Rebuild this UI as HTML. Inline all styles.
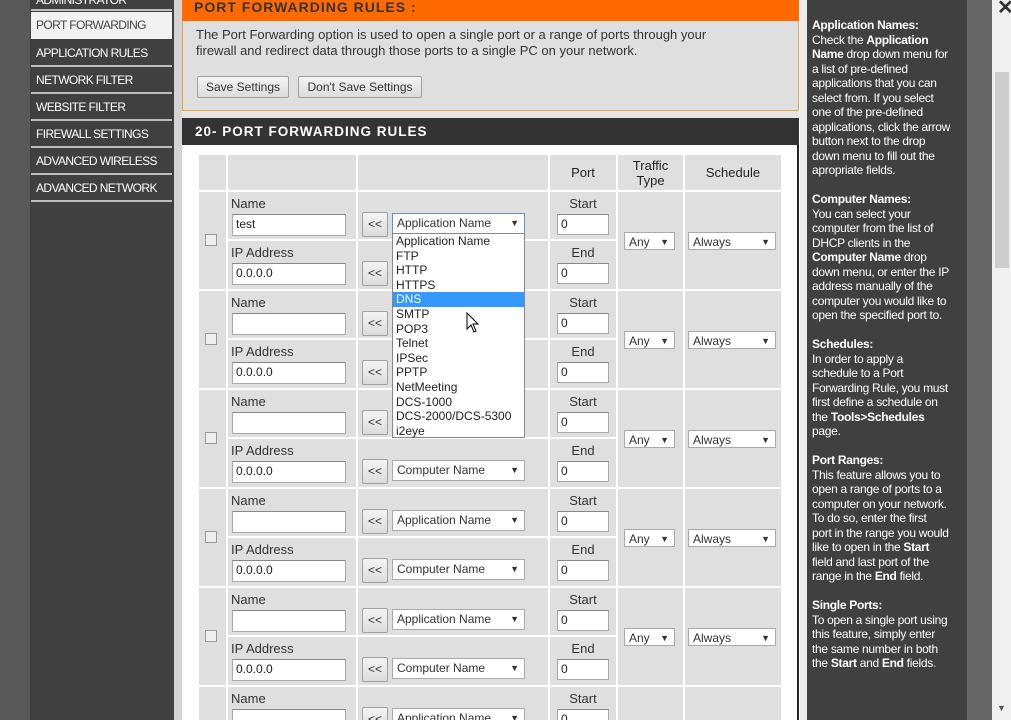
<!DOCTYPE html>
<html style="overflow:hidden;height:720px"><head><meta charset="utf-8"><style>
*{margin:0;padding:0;box-sizing:border-box}
body{width:1011px;height:720px;overflow:hidden;position:relative;background:#fff;font-family:"Liberation Sans",Tahoma,sans-serif;font-size:12.5px;color:#222}
.a{position:absolute}
.side{left:0;top:0;width:30px;height:720px;background:#595959}
.menu{left:30px;top:0;width:144px;height:720px;background:#404040}
.mi{position:absolute;left:31px;width:141px;height:27px;color:#fff;font-size:12px;letter-spacing:-0.6px;line-height:26px;padding-left:5px;border-bottom:2px solid #bdbdbd;white-space:nowrap;overflow:hidden}
.gapstrip{left:174px;top:0;width:8px;height:720px;background:#d4d4d4}
.c{position:absolute;background:#dfdfdf}
.in{position:absolute;background:#fff;border:1px solid #a9a9a9;border-top-color:#888;font-size:12px;line-height:19px;padding-left:3px}
.btn{position:absolute;background:linear-gradient(#f4f4f4,#dcdcdc);border:1px solid #a0a0a0;border-radius:2px;font-size:12px;text-align:center;color:#333;white-space:nowrap}
.sel{position:absolute;background:#fff;border:1px solid #aaa;font-size:12px;line-height:18px;padding-left:4px;color:#333;white-space:nowrap}
.sel:after{content:"\25BC";position:absolute;right:5px;top:0;font-size:9px}
.lb{position:absolute;font-size:13px;color:#333;white-space:nowrap}
.row{position:absolute;left:0;width:1011px;height:99px;overflow:visible}
.help{left:807px;top:0;width:160px;height:720px;background:#404040;color:#fff;font-size:12px;line-height:14.5px;padding:18px 0 0 5px;letter-spacing:-0.3px;white-space:nowrap;overflow:hidden}
.dd{left:392px;top:233px;width:133px;height:205px;background:#fff;border:1px solid #888;font-size:12px;line-height:14.6px;color:#222}
.dd div{padding-left:3px;height:14.6px}
#wrap{position:absolute;left:0;top:0;width:1011px;height:720px;overflow:hidden}
</style></head><body><div id="wrap">
<div class="a side"></div>
<div class="a menu"></div>
<div class="mi" style="top:0;height:11px;line-height:0px">ADMINISTRATOR</div>
<div class="mi" style="top:12px;background:#f2f2f2;color:#444;border-bottom:none">PORT FORWARDING</div>
<div class="mi" style="top:40px">APPLICATION RULES</div>
<div class="mi" style="top:67px">NETWORK FILTER</div>
<div class="mi" style="top:94px">WEBSITE FILTER</div>
<div class="mi" style="top:121px">FIREWALL SETTINGS</div>
<div class="mi" style="top:148px">ADVANCED WIRELESS</div>
<div class="mi" style="top:175px">ADVANCED NETWORK</div>
<div class="a gapstrip"></div>

<div class="a" style="left:182px;top:0;width:617px;height:720px;background:#e6e6e6"></div>
<div class="a" style="left:182px;top:0;width:617px;height:21px;background:#ff6a00;color:#333;font-weight:bold;font-size:14px;letter-spacing:1px;padding-left:12px;line-height:14px">PORT FORWARDING RULES :</div>
<div class="a" style="left:182px;top:21px;width:617px;height:90px;background:#dfdfdf;border:1px solid #f0a040;border-top:none"></div>
<div class="a" style="left:196px;top:27px;font-size:13px;line-height:16px;color:#333;white-space:nowrap">The Port Forwarding option is used to open a single port or a range of ports through your<br>firewall and redirect data through those ports to a single PC on your network.</div>
<div class="btn" style="left:197px;top:76px;width:92px;height:22px;line-height:20px">Save Settings</div>
<div class="btn" style="left:298px;top:76px;width:124px;height:22px;line-height:20px">Don't Save Settings</div>
<div class="a" style="left:182px;top:118px;width:617px;height:27px;background:#333;color:#fff;font-weight:bold;font-size:13.5px;letter-spacing:1px;padding-left:13px;line-height:27px">20- PORT FORWARDING RULES</div>
<div class="a" style="left:182px;top:145px;width:617px;height:575px;background:#fff;border-right:2px solid #222"></div>

<div class="c" style="left:199px;top:155px;width:27px;height:35px"></div>
<div class="c" style="left:228px;top:155px;width:128px;height:35px"></div>
<div class="c" style="left:358px;top:155px;width:190px;height:35px"></div>
<div class="c" style="left:550px;top:155px;width:66px;height:35px;text-align:center;line-height:35px;font-size:13px">Port</div>
<div class="c" style="left:618px;top:155px;width:65px;height:35px;text-align:center;font-size:13px;line-height:15px;padding-top:3px">Traffic<br>Type</div>
<div class="c" style="left:685px;top:155px;width:96px;height:35px;text-align:center;line-height:35px;font-size:13px">Schedule</div>

<div class="row" style="top:192px">
<div class="c" style="left:199px;top:0;width:27px;height:97px"></div><div class="a" style="left:205px;top:42px;width:12px;height:12px;border:1px solid #999;background:#eee"></div>
<div class="c" style="left:228px;top:0;width:128px;height:47px"></div><div class="c" style="left:228px;top:49px;width:128px;height:48px"></div>
<div class="c" style="left:358px;top:0;width:190px;height:47px"></div><div class="c" style="left:358px;top:49px;width:190px;height:48px"></div>
<div class="c" style="left:550px;top:0;width:66px;height:47px"></div><div class="c" style="left:550px;top:49px;width:66px;height:48px"></div>
<div class="c" style="left:618px;top:0;width:65px;height:97px"></div><div class="c" style="left:685px;top:0;width:96px;height:97px"></div>
<div class="lb" style="left:231px;top:4px">Name</div><div class="in" style="left:232px;top:22px;width:114px;height:22px">test</div>
<div class="lb" style="left:231px;top:53px">IP Address</div><div class="in" style="left:232px;top:71px;width:114px;height:22px">0.0.0.0</div>
<div class="btn" style="left:362px;top:20px;width:26px;height:25px;line-height:23px">&lt;&lt;</div><div class="sel" style="left:392px;top:21px;width:133px;height:21px;border-color:#6a8fc0">Application Name</div>
<div class="btn" style="left:362px;top:69px;width:26px;height:25px;line-height:23px">&lt;&lt;</div><div class="sel" style="left:392px;top:70px;width:133px;height:21px">Computer Name</div>
<div class="lb" style="left:550px;width:66px;text-align:center;top:4px">Start</div><div class="in" style="left:557px;top:22px;width:52px;height:21px">0</div>
<div class="lb" style="left:550px;width:66px;text-align:center;top:53px">End</div><div class="in" style="left:557px;top:71px;width:52px;height:21px">0</div>
<div class="sel" style="left:624px;top:40px;width:51px;height:18px">Any</div><div class="sel" style="left:688px;top:40px;width:88px;height:18px">Always</div>
</div>

<div class="row" style="top:291px">
<div class="c" style="left:199px;top:0;width:27px;height:97px"></div><div class="a" style="left:205px;top:42px;width:12px;height:12px;border:1px solid #999;background:#eee"></div>
<div class="c" style="left:228px;top:0;width:128px;height:47px"></div><div class="c" style="left:228px;top:49px;width:128px;height:48px"></div>
<div class="c" style="left:358px;top:0;width:190px;height:47px"></div><div class="c" style="left:358px;top:49px;width:190px;height:48px"></div>
<div class="c" style="left:550px;top:0;width:66px;height:47px"></div><div class="c" style="left:550px;top:49px;width:66px;height:48px"></div>
<div class="c" style="left:618px;top:0;width:65px;height:97px"></div><div class="c" style="left:685px;top:0;width:96px;height:97px"></div>
<div class="lb" style="left:231px;top:4px">Name</div><div class="in" style="left:232px;top:22px;width:114px;height:22px"></div>
<div class="lb" style="left:231px;top:53px">IP Address</div><div class="in" style="left:232px;top:71px;width:114px;height:22px">0.0.0.0</div>
<div class="btn" style="left:362px;top:20px;width:26px;height:25px;line-height:23px">&lt;&lt;</div><div class="sel" style="left:392px;top:21px;width:133px;height:21px">Application Name</div>
<div class="btn" style="left:362px;top:69px;width:26px;height:25px;line-height:23px">&lt;&lt;</div><div class="sel" style="left:392px;top:70px;width:133px;height:21px">Computer Name</div>
<div class="lb" style="left:550px;width:66px;text-align:center;top:4px">Start</div><div class="in" style="left:557px;top:22px;width:52px;height:21px">0</div>
<div class="lb" style="left:550px;width:66px;text-align:center;top:53px">End</div><div class="in" style="left:557px;top:71px;width:52px;height:21px">0</div>
<div class="sel" style="left:624px;top:40px;width:51px;height:18px">Any</div><div class="sel" style="left:688px;top:40px;width:88px;height:18px">Always</div>
</div>

<div class="row" style="top:390px">
<div class="c" style="left:199px;top:0;width:27px;height:97px"></div><div class="a" style="left:205px;top:42px;width:12px;height:12px;border:1px solid #999;background:#eee"></div>
<div class="c" style="left:228px;top:0;width:128px;height:47px"></div><div class="c" style="left:228px;top:49px;width:128px;height:48px"></div>
<div class="c" style="left:358px;top:0;width:190px;height:47px"></div><div class="c" style="left:358px;top:49px;width:190px;height:48px"></div>
<div class="c" style="left:550px;top:0;width:66px;height:47px"></div><div class="c" style="left:550px;top:49px;width:66px;height:48px"></div>
<div class="c" style="left:618px;top:0;width:65px;height:97px"></div><div class="c" style="left:685px;top:0;width:96px;height:97px"></div>
<div class="lb" style="left:231px;top:4px">Name</div><div class="in" style="left:232px;top:22px;width:114px;height:22px"></div>
<div class="lb" style="left:231px;top:53px">IP Address</div><div class="in" style="left:232px;top:71px;width:114px;height:22px">0.0.0.0</div>
<div class="btn" style="left:362px;top:20px;width:26px;height:25px;line-height:23px">&lt;&lt;</div><div class="sel" style="left:392px;top:21px;width:133px;height:21px">Application Name</div>
<div class="btn" style="left:362px;top:69px;width:26px;height:25px;line-height:23px">&lt;&lt;</div><div class="sel" style="left:392px;top:70px;width:133px;height:21px">Computer Name</div>
<div class="lb" style="left:550px;width:66px;text-align:center;top:4px">Start</div><div class="in" style="left:557px;top:22px;width:52px;height:21px">0</div>
<div class="lb" style="left:550px;width:66px;text-align:center;top:53px">End</div><div class="in" style="left:557px;top:71px;width:52px;height:21px">0</div>
<div class="sel" style="left:624px;top:40px;width:51px;height:18px">Any</div><div class="sel" style="left:688px;top:40px;width:88px;height:18px">Always</div>
</div>

<div class="row" style="top:489px">
<div class="c" style="left:199px;top:0;width:27px;height:97px"></div><div class="a" style="left:205px;top:42px;width:12px;height:12px;border:1px solid #999;background:#eee"></div>
<div class="c" style="left:228px;top:0;width:128px;height:47px"></div><div class="c" style="left:228px;top:49px;width:128px;height:48px"></div>
<div class="c" style="left:358px;top:0;width:190px;height:47px"></div><div class="c" style="left:358px;top:49px;width:190px;height:48px"></div>
<div class="c" style="left:550px;top:0;width:66px;height:47px"></div><div class="c" style="left:550px;top:49px;width:66px;height:48px"></div>
<div class="c" style="left:618px;top:0;width:65px;height:97px"></div><div class="c" style="left:685px;top:0;width:96px;height:97px"></div>
<div class="lb" style="left:231px;top:4px">Name</div><div class="in" style="left:232px;top:22px;width:114px;height:22px"></div>
<div class="lb" style="left:231px;top:53px">IP Address</div><div class="in" style="left:232px;top:71px;width:114px;height:22px">0.0.0.0</div>
<div class="btn" style="left:362px;top:20px;width:26px;height:25px;line-height:23px">&lt;&lt;</div><div class="sel" style="left:392px;top:21px;width:133px;height:21px">Application Name</div>
<div class="btn" style="left:362px;top:69px;width:26px;height:25px;line-height:23px">&lt;&lt;</div><div class="sel" style="left:392px;top:70px;width:133px;height:21px">Computer Name</div>
<div class="lb" style="left:550px;width:66px;text-align:center;top:4px">Start</div><div class="in" style="left:557px;top:22px;width:52px;height:21px">0</div>
<div class="lb" style="left:550px;width:66px;text-align:center;top:53px">End</div><div class="in" style="left:557px;top:71px;width:52px;height:21px">0</div>
<div class="sel" style="left:624px;top:40px;width:51px;height:18px">Any</div><div class="sel" style="left:688px;top:40px;width:88px;height:18px">Always</div>
</div>

<div class="row" style="top:588px">
<div class="c" style="left:199px;top:0;width:27px;height:97px"></div><div class="a" style="left:205px;top:42px;width:12px;height:12px;border:1px solid #999;background:#eee"></div>
<div class="c" style="left:228px;top:0;width:128px;height:47px"></div><div class="c" style="left:228px;top:49px;width:128px;height:48px"></div>
<div class="c" style="left:358px;top:0;width:190px;height:47px"></div><div class="c" style="left:358px;top:49px;width:190px;height:48px"></div>
<div class="c" style="left:550px;top:0;width:66px;height:47px"></div><div class="c" style="left:550px;top:49px;width:66px;height:48px"></div>
<div class="c" style="left:618px;top:0;width:65px;height:97px"></div><div class="c" style="left:685px;top:0;width:96px;height:97px"></div>
<div class="lb" style="left:231px;top:4px">Name</div><div class="in" style="left:232px;top:22px;width:114px;height:22px"></div>
<div class="lb" style="left:231px;top:53px">IP Address</div><div class="in" style="left:232px;top:71px;width:114px;height:22px">0.0.0.0</div>
<div class="btn" style="left:362px;top:20px;width:26px;height:25px;line-height:23px">&lt;&lt;</div><div class="sel" style="left:392px;top:21px;width:133px;height:21px">Application Name</div>
<div class="btn" style="left:362px;top:69px;width:26px;height:25px;line-height:23px">&lt;&lt;</div><div class="sel" style="left:392px;top:70px;width:133px;height:21px">Computer Name</div>
<div class="lb" style="left:550px;width:66px;text-align:center;top:4px">Start</div><div class="in" style="left:557px;top:22px;width:52px;height:21px">0</div>
<div class="lb" style="left:550px;width:66px;text-align:center;top:53px">End</div><div class="in" style="left:557px;top:71px;width:52px;height:21px">0</div>
<div class="sel" style="left:624px;top:40px;width:51px;height:18px">Any</div><div class="sel" style="left:688px;top:40px;width:88px;height:18px">Always</div>
</div>

<div class="row" style="top:687px;height:33px;overflow:hidden">
<div class="c" style="left:199px;top:0;width:27px;height:33px"></div>
<div class="c" style="left:228px;top:0;width:128px;height:33px"></div>
<div class="c" style="left:358px;top:0;width:190px;height:33px"></div>
<div class="c" style="left:550px;top:0;width:66px;height:33px"></div>
<div class="c" style="left:618px;top:0;width:65px;height:33px"></div><div class="c" style="left:685px;top:0;width:96px;height:33px"></div>
<div class="lb" style="left:231px;top:4px">Name</div><div class="in" style="left:232px;top:22px;width:114px;height:22px"></div>
<div class="btn" style="left:362px;top:20px;width:26px;height:25px;line-height:23px">&lt;&lt;</div><div class="sel" style="left:392px;top:21px;width:133px;height:21px">Application Name</div>
<div class="lb" style="left:550px;width:66px;text-align:center;top:4px">Start</div><div class="in" style="left:557px;top:22px;width:52px;height:21px">0</div>
</div>

<div class="a dd"><div>Application Name</div><div>FTP</div><div>HTTP</div><div>HTTPS</div><div style="background:#3399ff;color:#fff">DNS</div><div>SMTP</div><div>POP3</div><div>Telnet</div><div>IPSec</div><div>PPTP</div><div>NetMeeting</div><div>DCS-1000</div><div>DCS-2000/DCS-5300</div><div>i2eye</div></div>
<svg class="a" style="left:466px;top:312px" width="14" height="22" viewBox="0 0 14 22"><path d="M1 1 L1 17 L5 13 L8 20 L10 19 L7 12 L12 12 Z" fill="#fff" stroke="#000" stroke-width="1"/></svg>

<div class="a" style="left:800px;top:0;width:7px;height:720px;background:#ececec"></div>
<div class="a help"><b>Application Names:</b><br>Check the <b>Application</b><br><b>Name</b> drop down menu for<br>a list of pre-defined<br>applications that you can<br>select from. If you select<br>one of the pre-defined<br>applications, click the arrow<br>button next to the drop<br>down menu to fill out the<br>apropriate fields.<br><br><b>Computer Names:</b><br>You can select your<br>computer from the list of<br>DHCP clients in the<br><b>Computer Name</b> drop<br>down menu, or enter the IP<br>address manually of the<br>computer you would like to<br>open the specified port to.<br><br><b>Schedules:</b><br>In order to apply a<br>schedule to a Port<br>Forwarding Rule, you must<br>first define a schedule on<br>the <b>Tools&gt;Schedules</b><br>page.<br><br><b>Port Ranges:</b><br>This feature allows you to<br>open a range of ports to a<br>computer on your network.<br>To do so, enter the first<br>port in the range you would<br>like to open in the <b>Start</b><br>field and last port of the<br>range in the <b>End</b> field.<br><br><b>Single Ports:</b><br>To open a single port using<br>this feature, simply enter<br>the same number in both<br>the <b>Start</b> and <b>End</b> fields.</div>
<div class="a" style="left:967px;top:0;width:25px;height:720px;background:#656565"></div>
<div class="a" style="left:992px;top:0;width:19px;height:720px;background:#f0f0f0"></div>
<div class="a" style="left:995px;top:72px;width:14px;height:196px;background:#cdcdcd"></div>
<div class="a" style="left:997px;top:-4px;font-size:20px;font-weight:bold;color:#333;line-height:24px">✕</div>
<div class="a" style="left:997px;top:702px;font-size:9px;color:#555;line-height:12px">▼</div>
</div></body></html>
